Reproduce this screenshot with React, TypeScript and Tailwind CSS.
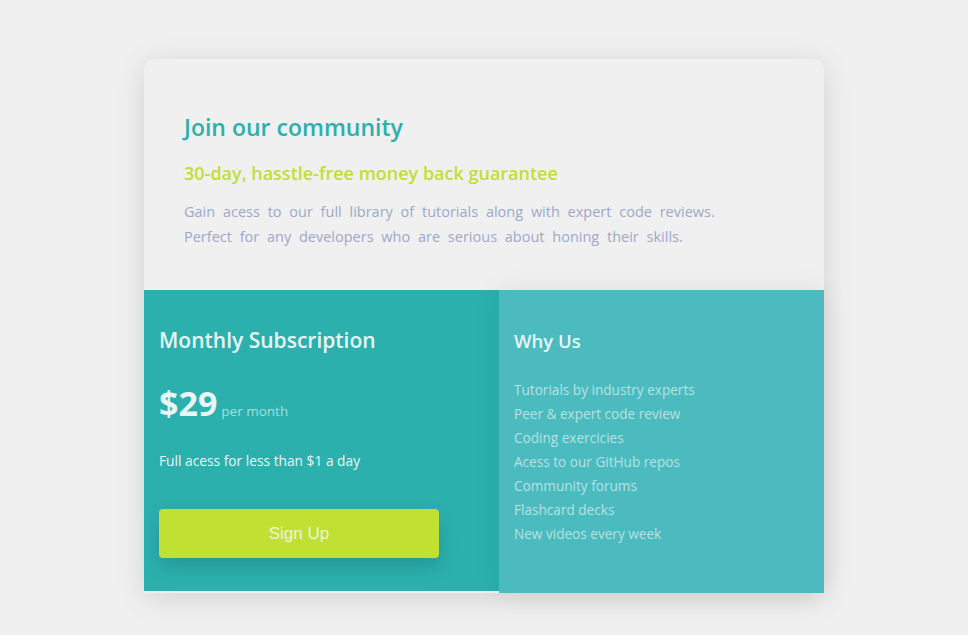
import React from "react";

const features = [
  "Tutorials by industry experts",
  "Peer & expert code review",
  "Coding exercicies",
  "Acess to our GitHub repos",
  "Community forums",
  "Flashcard decks",
  "New videos every week",
];

export default function App() {
  return (
    <div className="min-h-[635px] w-full bg-[#f0f0f0] pt-[59px] font-['Open_Sans',sans-serif]">
      <div className="mx-auto w-[680px] rounded-t-[10px] bg-[#f0f0f0] shadow-[0_5px_30px_rgba(0,0,0,0.12)]">
        <div className="px-10 pb-[41px] pt-[53px]">
          <h1 className="text-[23px] font-semibold leading-[30px] text-[#2bb0ae]">Join our community</h1>
          <h2 className="mt-[18px] text-[18px] font-semibold leading-[26px] text-[#c0df34]">
            30-day, hasstle-free money back guarantee
          </h2>
          <p className="mt-[13px] text-[14.5px] leading-[25px] [word-spacing:4px] text-[#9ea8c8]">
            Gain acess to our full library of tutorials along with expert code reviews.
            <br />
            Perfect for any developers who are serious about honing their skills.
          </p>
        </div>
        <div className="flex">
          <div className="h-[301px] w-[355px] bg-[#2bb0ae] px-[15px] pt-[36px]">
            <h3 className="text-[21px] font-semibold leading-[28px] text-[#e8f6f6]">Monthly Subscription</h3>
            <div className="mt-[29px] flex items-baseline gap-[4px]">
              <span className="text-[34px] font-bold leading-[40px] text-[#e8f6f6]">$29</span>
              <span className="text-[13.5px] text-[#a6dedd]">per month</span>
            </div>
            <p className="mt-[28px] text-[13.75px] leading-[20px] text-[#e8f6f6]">Full acess for less than $1 a day</p>
            <button
              type="button"
              className="mt-[38px] flex h-[49px] w-[280px] items-center justify-center rounded-[4px] bg-[#c0e033] font-['Liberation_Sans',sans-serif] text-[17px] text-[#eef2e0] shadow-[0_8px_20px_rgba(0,0,0,0.15)]"
            >
              Sign Up
            </button>
          </div>
          <div className="relative h-[303px] w-[325px] bg-[#4bbbbf] px-[15px] pt-[38px] shadow-[0_0_25px_rgba(0,0,0,0.08)]">
            <h3 className="text-[18.5px] font-semibold leading-[26px] text-[#e8f6f6]">Why Us</h3>
            <ul className="mt-[24px]">
              {features.map((f) => (
                <li key={f} className="text-[13.6px] leading-[24px] text-[#b6e2e2]">
                  {f}
                </li>
              ))}
            </ul>
          </div>
        </div>
      </div>
    </div>
  );
}
